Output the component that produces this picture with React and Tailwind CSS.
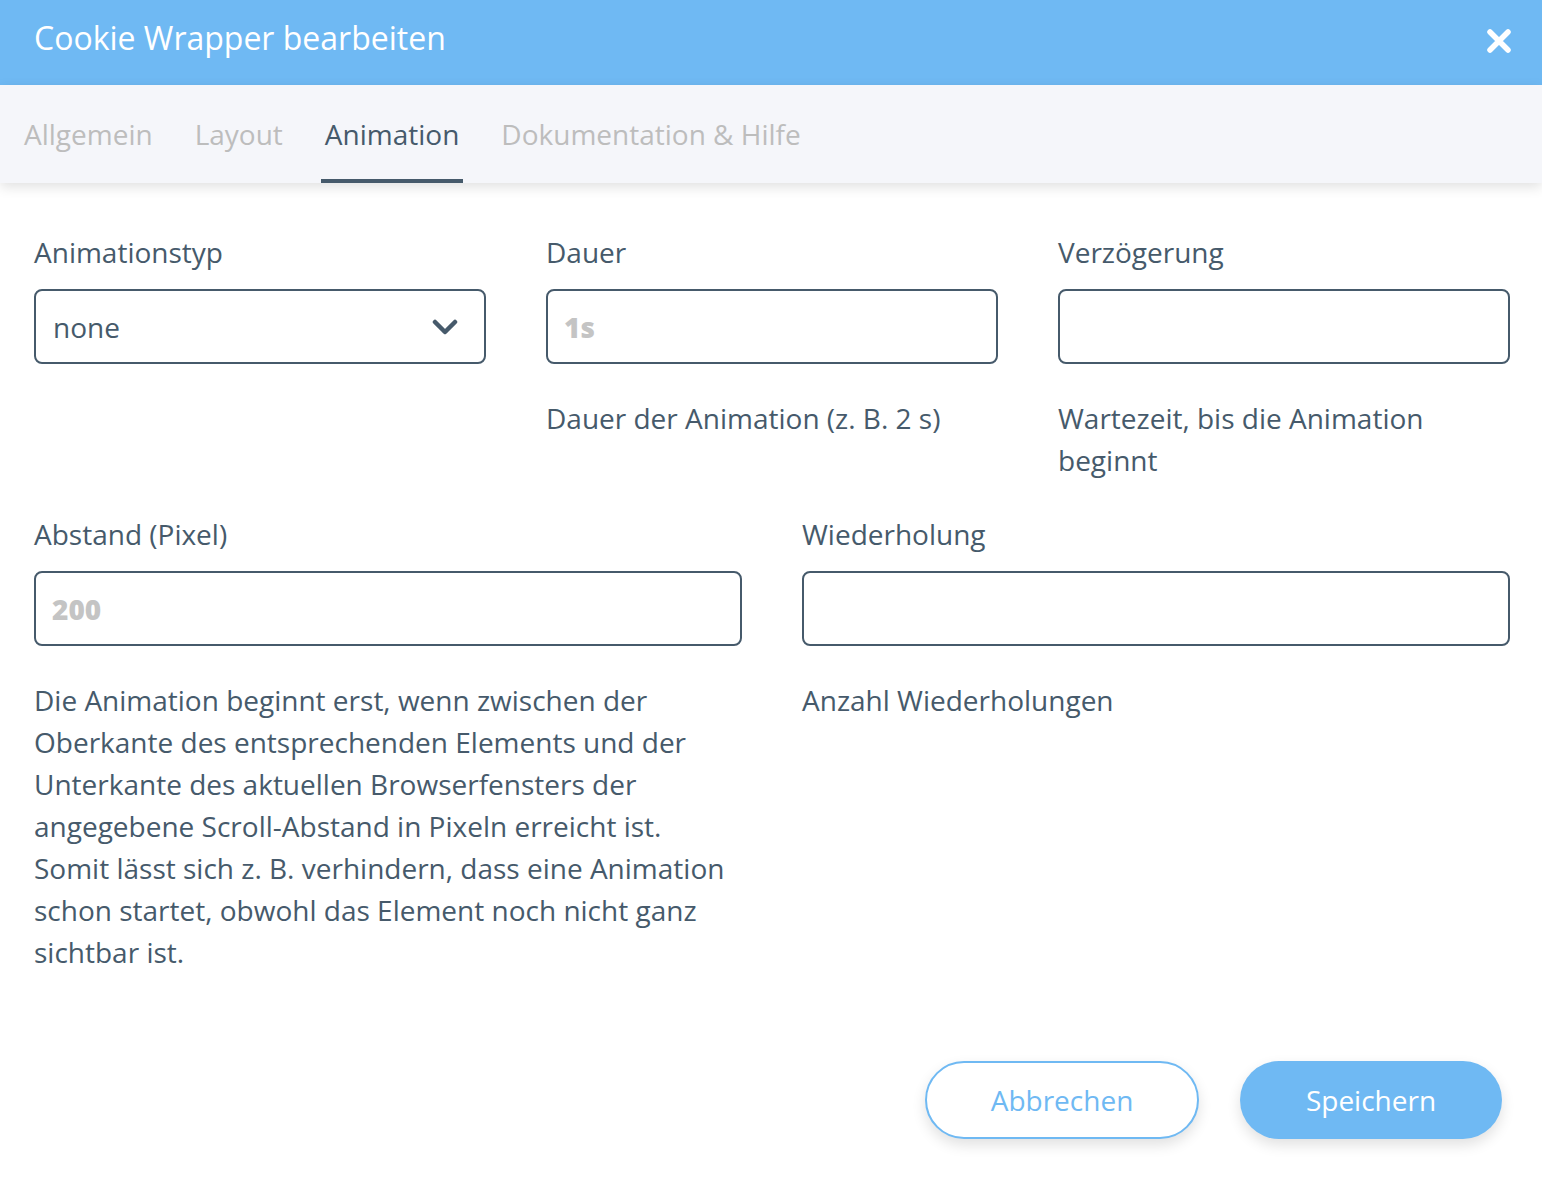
const Field = ({ label, placeholder, select, help, className = "" }) => (
  <div className={`flex flex-col ${className}`}>
    <label className="text-[28px] leading-[42px] text-[#465a6b] mb-[16px]">{label}</label>
    {select ? (
      <div className="h-[75px] border-2 border-[#465a6b] rounded-[8px] flex items-center justify-between pl-[17px] pr-[26px]">
        <span className="text-[28px] text-[#465a6b]">none</span>
        <svg width="26" height="16" viewBox="0 0 26 16" fill="none">
          <path d="M3 3l10 10 10-10" stroke="#465a6b" strokeWidth="4.5" strokeLinecap="round" strokeLinejoin="round" />
        </svg>
      </div>
    ) : (
      <div className="h-[75px] border-2 border-[#465a6b] rounded-[8px] flex items-center pl-[16px]">
        {placeholder && (
          <span className="text-[28px] font-extrabold text-[#c4c4c4]">{placeholder}</span>
        )}
      </div>
    )}
    {help && (
      <p className="mt-[33px] text-[28px] leading-[42px] text-[#465a6b]">{help}</p>
    )}
  </div>
);

export default function App() {
  const tabs = ["Allgemein", "Layout", "Animation", "Dokumentation & Hilfe"];
  return (
    <div className="w-[1542px] h-[1180px] bg-white flex flex-col" style={{ fontFamily: '"Open Sans", sans-serif' }}>
      <div className="h-[85px] bg-[#6fb9f3] flex items-center justify-between pl-[34px] pr-[30px] pb-[10px] shrink-0">
        <h1 className="text-[32px] text-white">Cookie Wrapper bearbeiten</h1>
        <svg width="26" height="26" viewBox="0 0 26 26" className="mt-[6px]">
          <path d="M4 4l18 18M22 4L4 22" stroke="white" strokeWidth="5.5" strokeLinecap="round" />
        </svg>
      </div>
      <div className="h-[98px] bg-[#f5f6fa] flex items-stretch pl-[20px] pr-[21px] gap-[34px] shadow-[0_4px_12px_rgba(0,0,0,0.12)] relative z-10 shrink-0">
        {tabs.map((t) => (
          <div
            key={t}
            className={`flex items-center px-[4px] pt-[4px] border-b-4 ${
              t === "Animation" ? "border-[#465a6b] text-[#465a6b]" : "border-transparent text-[#bdbdbd]"
            } text-[28px]`}
          >
            {t}
          </div>
        ))}
      </div>
      <div className="flex-1 flex flex-col pl-[34px] pr-[32px] pt-[48px]">
        <div className="grid grid-cols-3 gap-x-[60px] items-start">
          <Field label="Animationstyp" select />
          <Field label="Dauer" placeholder="1s" help="Dauer der Animation (z. B. 2 s)" />
          <Field label="Verzögerung" help="Wartezeit, bis die Animation beginnt" />
        </div>
        <div className="grid grid-cols-2 gap-x-[60px] items-start mt-[32px]">
          <Field
            label="Abstand (Pixel)"
            placeholder="200"
            help="Die Animation beginnt erst, wenn zwischen der Oberkante des entsprechenden Elements und der Unterkante des aktuellen Browserfensters der angegebene Scroll-Abstand in Pixeln erreicht ist. Somit lässt sich z. B. verhindern, dass eine Animation schon startet, obwohl das Element noch nicht ganz sichtbar ist."
          />
          <Field label="Wiederholung" help="Anzahl Wiederholungen" />
        </div>
        <div className="flex justify-end gap-[41px] mt-auto mb-[41px] pr-[8px]">
          <button className="w-[274px] h-[78px] rounded-full border-2 border-[#6fb9f3] bg-white text-[#6fb9f3] text-[28px] shadow-[0_6px_14px_rgba(0,0,0,0.12)]">
            Abbrechen
          </button>
          <button className="w-[262px] h-[78px] rounded-full bg-[#6fb9f3] text-white text-[28px] shadow-[0_6px_14px_rgba(0,0,0,0.12)]">
            Speichern
          </button>
        </div>
      </div>
    </div>
  );
}
